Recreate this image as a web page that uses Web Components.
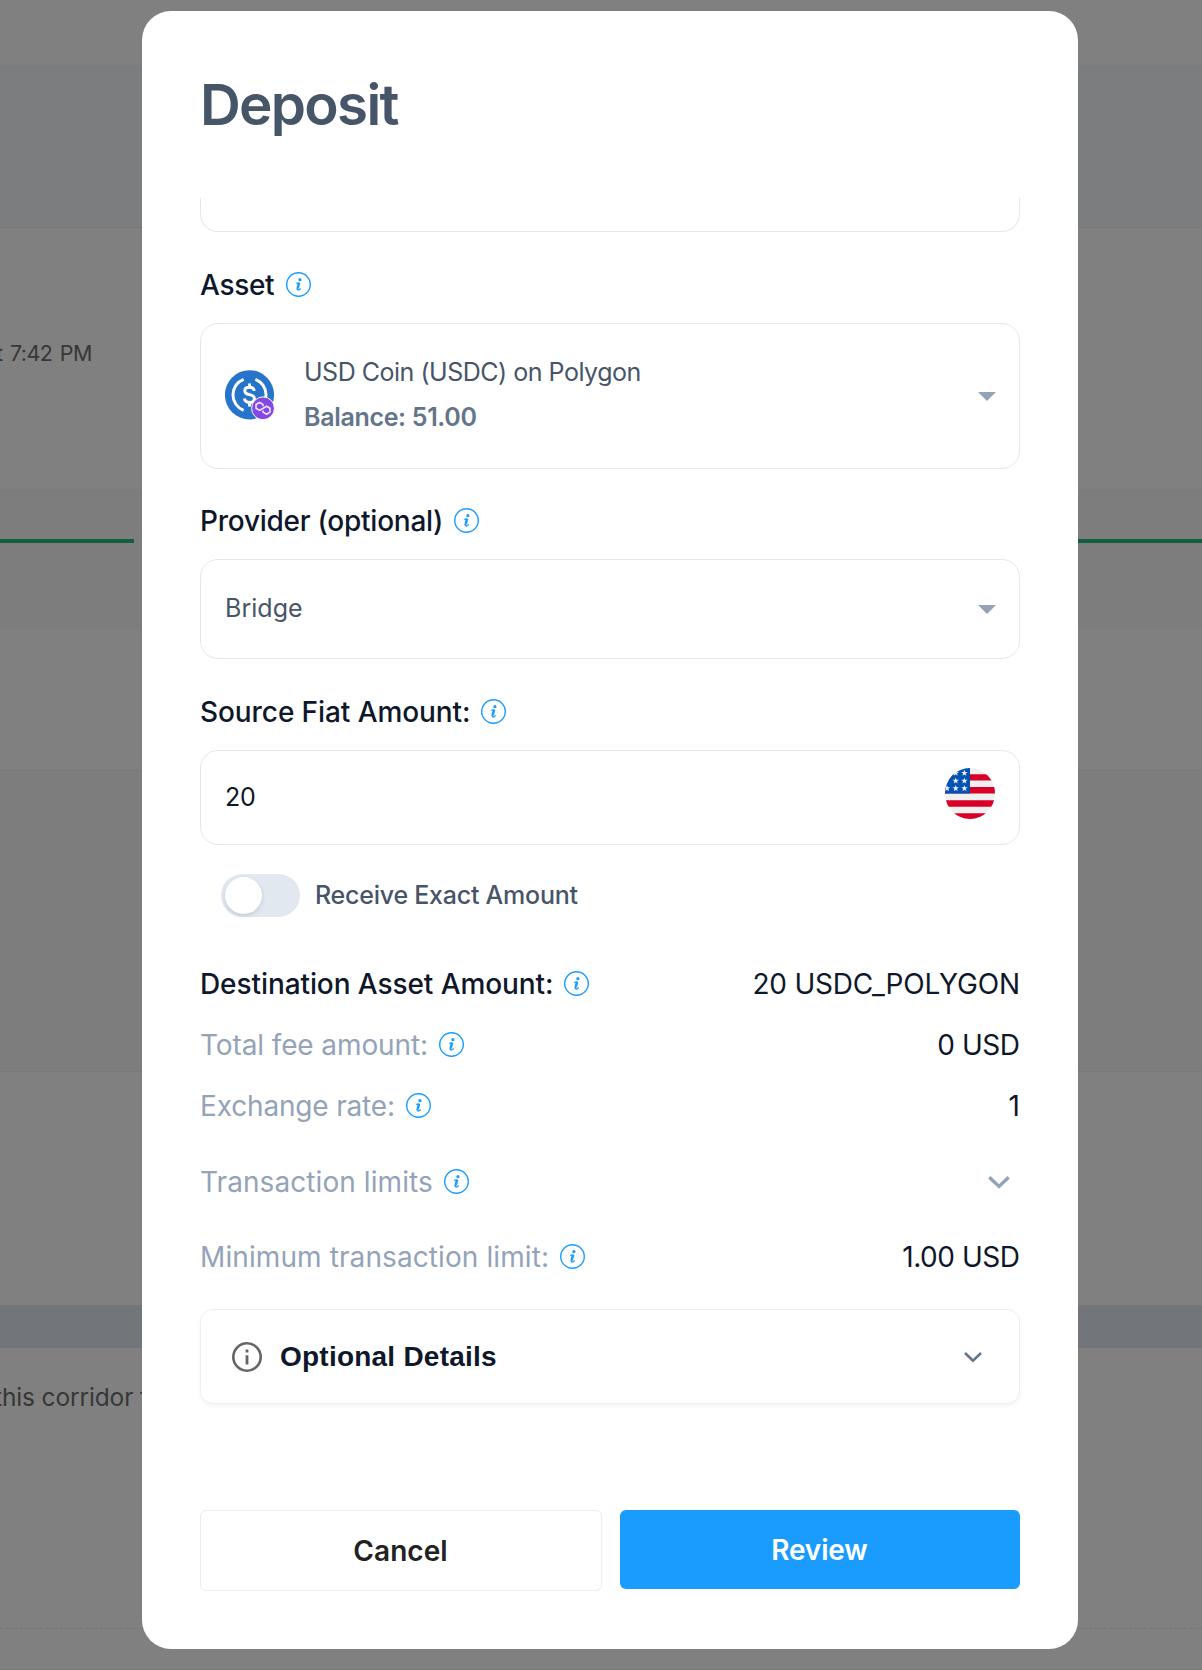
<!DOCTYPE html>
<html lang="en">
<head>
<meta charset="utf-8">
<title>Deposit</title>
<style>
html,body{margin:0;height:1670px;overflow:hidden;background:#808080}
body{font-family:Inter,"Liberation Sans",sans-serif;color:#0f172a;position:relative;width:1202px}
</style>
</head>
<body>
<page-backdrop></page-backdrop>
<deposit-modal></deposit-modal>
<script>
const define = (name, html, ready) => {
  const tpl = document.createElement('template');
  tpl.innerHTML = html;
  customElements.define(name, class extends HTMLElement {
    connectedCallback() {
      if (this.shadowRoot) return;
      this.attachShadow({mode: 'open'}).append(tpl.content.cloneNode(true));
      if (ready) ready(this, this.shadowRoot);
    }
  });
};

/* Text tracked so that its ink spans the width given in "w". */
const ctx = document.createElement('canvas').getContext('2d');
define('fit-text', `<style>:host{display:block;white-space:pre;flex:none}</style><slot></slot>`, el => {
  const cs = getComputedStyle(el), text = el.textContent;
  ctx.font = `${cs.fontWeight} ${cs.fontSize} ${cs.fontFamily}`;
  const m = ctx.measureText(text);
  const ink = m.actualBoundingBoxLeft + m.actualBoundingBoxRight;
  if (text.length < 2) return;
  const ls = (parseFloat(el.getAttribute('w')) - ink) / (text.length - 1);
  el.style.letterSpacing = ls.toFixed(3) + 'px';
  el.style.marginRight = (-ls).toFixed(3) + 'px';
});

define('info-icon', `<style>:host{display:block;width:25px;height:25px;flex:none}svg{display:block}</style>
<svg width="25" height="25" viewBox="0 0 25 25" fill="none" stroke="#1a9cff">
<circle cx="12.5" cy="12.5" r="11.8" stroke-width="1.4"/>
<circle cx="13.9" cy="7.7" r="1.6" fill="#1a9cff" stroke="none"/>
<path d="M10.2 11.4L13.4 11" stroke-width="1.3"/>
<path d="M13.1 10.7L11.7 16.3Q11.5 17.5 12.4 17.3" stroke-width="2.5"/>
<path d="M11.7 18Q13.5 18 14.7 16.3" stroke-width="1.2"/></svg>`);

define('field-label', `<style>:host{display:flex;align-items:center;gap:11px;height:25px;font-size:28px;line-height:26px;font-weight:500}
.t{padding-top:1px}</style><div class="t"><slot></slot></div><info-icon></info-icon>`);

define('summary-row', `<style>:host{display:flex;justify-content:space-between;align-items:center;height:25px}
field-label{color:#94a3b8;font-weight:400}
:host([strong]) field-label{color:#0f172a;font-weight:500}
.v{font-size:28px;line-height:26px;padding-top:1px}</style>
<field-label><slot></slot></field-label><div class="v"><slot name="value"></slot></div>`);

define('field-box', `<style>:host{display:flex;align-items:center;box-sizing:border-box;border:1px solid #e2e8f0;border-radius:18px;padding:0 23px 2px 24px;justify-content:space-between;font-size:25px;color:#475569}
.l{display:flex;align-items:center}</style><div class="l"><slot></slot></div><slot name="end"></slot>`);

define('caret-icon', `<style>:host{display:block;flex:none;height:9px;margin-top:3px}svg{display:block}</style>
<svg width="18" height="9"><path d="M0 0H18L9 9Z" fill="#94a3b8"/></svg>`);

define('token-icon', `<style>:host{display:block;width:50px;height:50px;flex:none}svg{display:block}</style>
<svg width="50" height="50" viewBox="0 0 50 50" fill="none" stroke="#fff">
<circle cx="24.5" cy="24.8" r="24.6" fill="#2775ca" stroke="none"/>
<path d="M18.6 9.3A16.6 16.6 0 0 0 18.6 40.3M30.4 9.3A16.6 16.6 0 0 1 30.4 40.3" stroke-width="2.9"/>
<path d="M29.2 20.9C28.9 18.4 27.1 17.3 24.5 17.3C21.6 17.3 19.8 18.7 19.8 20.9C19.8 23.2 21.6 24 24.5 24.6C27.8 25.3 29.4 26.4 29.4 28.8C29.4 31.2 27.3 32.5 24.6 32.5C21.6 32.5 19.8 31.1 19.4 28.6M24.5 13.5V17.3M24.5 32.5V36.4" stroke-width="3"/>
<circle cx="38" cy="38.3" r="11.4" fill="#8247e5" stroke-width="1"/>
<path d="M38 36.2V34.5L34.6 32.4L31 34.5V38.3L34.6 40.4L41.6 36.2L45 38.3V42.1L41.6 44.2L38 42.1V40.6" stroke="#efe4ff" stroke-width="1.6" stroke-linejoin="round"/></svg>`);

define('flag-icon', `<style>:host{display:block;width:50px;height:51px;flex:none;margin:0 1px 6px 0}svg{display:block}</style>
<svg width="50" height="51" viewBox="0 0 50 51"><defs><clipPath id="c"><ellipse cx="25" cy="25.5" rx="25" ry="25.5"/></clipPath>
<path id="s" d="M0-3.4L.8-1.1L3.3-1.1L1.3.4L2 2.8L0 1.4L-2 2.8L-1.3.4L-3.3-1.1L-.8-1.1Z" fill="#f0f0f0"/></defs>
<g clip-path="url(#c)"><path d="M0 0H50V51H0Z" fill="#f0f0f0"/>
<path d="M0 6.2H50V12.6H0ZM0 19H50V25.4H0ZM0 32.3H50V38.7H0ZM0 45.2H50V51H0Z" fill="#d80027"/>
<path d="M0 0H25V25.4H0Z" fill="#0052b4"/>
<use href="#s" x="10.7" y="5"/><use href="#s" x="19.4" y="5"/><use href="#s" x="10.7" y="12.8"/><use href="#s" x="19.4" y="12.8"/><use href="#s" x="2" y="20.4"/><use href="#s" x="10.7" y="20.4"/><use href="#s" x="19.4" y="20.4"/></g></svg>`);

define('toggle-switch', `<style>:host{display:flex;align-items:center;gap:15px;height:43px;padding-left:21px;color:#475569;font-size:25px;line-height:30px;font-weight:450}
.k{box-sizing:border-box;width:79px;height:43px;border-radius:22px;background:#e2e8f0;padding:2.5px 3.5px}
.k i{display:block;width:37px;height:37px;border-radius:50%;background:#fff;box-shadow:0 2px 4px rgba(15,23,42,.14)}
.t{padding-bottom:2px}</style>
<div class="k"><i></i></div><div class="t"><slot></slot></div>`);

define('details-card', `<style>:host{display:flex;align-items:center;box-sizing:border-box;height:95px;border:1px solid #eee;border-radius:13px;box-shadow:0 2px 4px rgba(0,0,0,.05);padding:0 37px 0 31px;font:700 28px/32px "Liberation Sans",sans-serif}
.t{margin-left:18px;flex:1}svg{display:block}</style>
<svg width="30" height="30" viewBox="0 0 30 30" fill="none" stroke="#646464"><circle cx="15" cy="15" r="13.7" stroke-width="2.6"/><path d="M15 13.2V22.5M15 7.4V10.4" stroke-width="2.8"/></svg>
<div class="t"><slot></slot></div>
<svg width="18" height="12" viewBox="0 0 18 12" fill="none" stroke="#64748b" stroke-width="2.6"><path d="M1 2L9 9.6L17 2"/></svg>`);

define('action-button', `<style>:host{display:flex;align-items:center;justify-content:center;box-sizing:border-box;border-radius:6px;font-size:28px;line-height:32px;font-weight:600;color:#222;border:1px solid #e9ebf5;width:402px;height:81px;padding:0 1px 0 0}
:host([primary]){background:#1a9cff;color:#fff;border:0;width:400px;height:79px}</style><slot></slot>`);

define('page-backdrop', `<style>:host{display:flex;flex-direction:column;width:1202px;height:1670px;background:#808080;color:#373737;overflow:hidden}
div{box-sizing:border-box;flex:none}
.a{height:65px}.b{height:163px;background:#7c7d7f;border-bottom:1px solid #757678}
.c{height:261px;padding:109px 0 0 0;font-size:21.5px;line-height:32px;display:flex}
.c fit-text{margin-left:-4px;word-spacing:2px}
.d{height:140px;background:#7d7d7d;padding-top:50px;display:flex;justify-content:space-between;align-items:flex-start}
.d i{display:block;height:4px;width:134px;background:#10603f}
.e{height:142px;border-bottom:1px solid #787878}.f{height:301px;background:#7d7d7d;border-bottom:1px solid #787878}
.g{height:233px}.h{height:43px;background:#727579}
.i{height:281px;border-bottom:1px dashed #74767f;padding-top:33px;font-size:24.5px;line-height:32px;display:flex}
.i fit-text{margin-left:-6px}
.j{height:41px;border-bottom:1px solid #777}</style>
<div class="a"></div><div class="b"></div><div class="c"><fit-text w="91">t 7:42 PM</fit-text></div>
<div class="d"><i></i><i></i></div><div class="e"></div><div class="f"></div><div class="g"></div><div class="h"></div>
<div class="i"><fit-text w="155">this corridor f</fit-text></div><div class="j"></div>`);

define('deposit-modal', `<style>
:host{position:absolute;left:142px;top:11px;width:936px;height:1638px;box-sizing:border-box;background:#fff;border-radius:29px;padding:0 58px;display:flex;flex-direction:column}
h1{margin:0;height:187px;flex:none;box-sizing:border-box;padding-top:59px;font-size:56.5px;line-height:70px;font-weight:600;color:#475569}
.cut{height:34px;box-sizing:border-box;border:1px solid #e2e8f0;border-top:0;border-radius:0 0 18px 18px;flex:none}
field-label{margin:40px 0 26px}
.asset{height:146px}.asset+field-label{margin-top:39px}.bridge{height:100px}.fiat{height:95px;color:#0f172a}
.names{margin-left:29px;display:flex;flex-direction:column;gap:15px;line-height:30px;padding-bottom:1px}
.bal{color:#64748b;font-weight:600}
toggle-switch{margin:29px 0 54px}
.rows{display:flex;flex-direction:column;gap:36px}
.lim{margin-top:51px}.min{margin:50px 0 40px}
.chev{display:block;margin-right:10px}
.foot{display:flex;justify-content:space-between;align-items:flex-start;margin-top:106px}
</style>
<h1><fit-text w="194.5">Deposit</fit-text></h1>
<div class="cut"></div>
<field-label><fit-text w="74">Asset</fit-text></field-label>
<field-box class="asset"><token-icon></token-icon><div class="names"><fit-text w="333.5">USD Coin (USDC) on Polygon</fit-text><fit-text class="bal" w="171.5">Balance: 51.00</fit-text></div><caret-icon slot="end"></caret-icon></field-box>
<field-label><fit-text w="239">Provider (optional)</fit-text></field-label>
<field-box class="bridge"><fit-text w="75">Bridge</fit-text><caret-icon slot="end"></caret-icon></field-box>
<field-label><fit-text w="268">Source Fiat Amount:</fit-text></field-label>
<field-box class="fiat"><fit-text w="29">20</fit-text><flag-icon slot="end"></flag-icon></field-box>
<toggle-switch><fit-text w="261.5">Receive Exact Amount</fit-text></toggle-switch>
<div class="rows">
<summary-row strong><fit-text w="350">Destination Asset Amount:</fit-text><fit-text slot="value" w="263.5">20 USDC_POLYGON</fit-text></summary-row>
<summary-row><fit-text w="225">Total fee amount:</fit-text><fit-text slot="value" w="80.5">0 USD</fit-text></summary-row>
<summary-row><fit-text w="191">Exchange rate:</fit-text><fit-text slot="value" w="9">1</fit-text></summary-row>
</div>
<summary-row class="lim"><fit-text w="231">Transaction limits</fit-text><svg slot="value" class="chev" width="22" height="15" viewBox="0 0 22 15" fill="none" stroke="#94a3b8" stroke-width="3.4"><path d="M1.3 2.2L11 11.4L20.7 2.2"/></svg></summary-row>
<summary-row class="min"><fit-text w="345">Minimum transaction limit:</fit-text><fit-text slot="value" w="115.5">1.00 USD</fit-text></summary-row>
<details-card><fit-text w="215">Optional Details</fit-text></details-card>
<div class="foot"><action-button><fit-text w="92">Cancel</fit-text></action-button><action-button primary><fit-text w="94">Review</fit-text></action-button></div>`);
</script>
</body>
</html>
